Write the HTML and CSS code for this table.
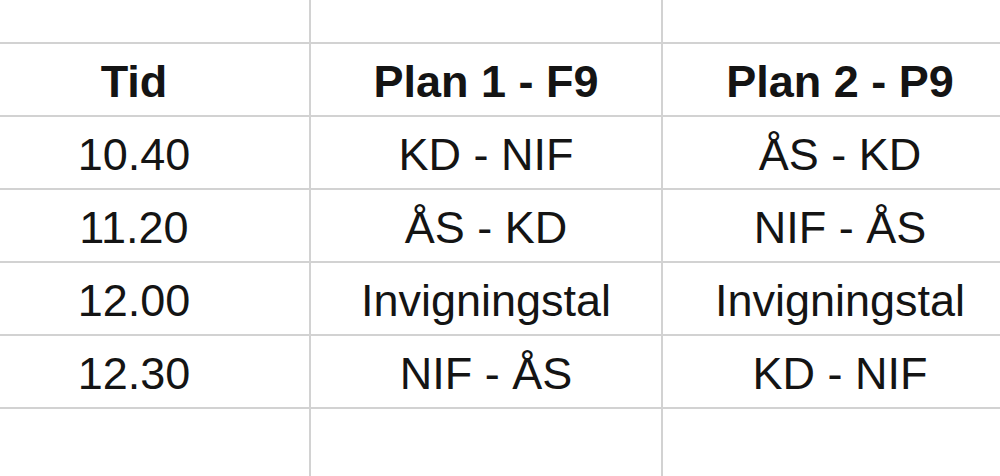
FILE: index.html
```html
<!DOCTYPE html>
<html lang="sv">
<head>
<meta charset="utf-8">
<title>Schema</title>
<link rel="stylesheet" href="styles.css">
</head>
<body>
<div class="sheet">
  <div class="cell"></div><div class="cell"></div><div class="cell"></div>
  <div class="cell head">Tid</div><div class="cell head">Plan 1 - F9</div><div class="cell head">Plan 2 - P9</div>
  <div class="cell">10.40</div><div class="cell">KD - NIF</div><div class="cell">ÅS - KD</div>
  <div class="cell">11.20</div><div class="cell">ÅS - KD</div><div class="cell">NIF - ÅS</div>
  <div class="cell">12.00</div><div class="cell">Invigningstal</div><div class="cell">Invigningstal</div>
  <div class="cell">12.30</div><div class="cell">NIF - ÅS</div><div class="cell">KD - NIF</div>
  <div class="cell"></div><div class="cell"></div><div class="cell"></div>
</div>
</body>
</html>
```

FILE: styles.css
```css
html, body {
  margin: 0;
  padding: 0;
  background: #ffffff;
  overflow: hidden;
}

body {
  width: 1000px;
  height: 476px;
}

.sheet {
  display: grid;
  grid-template-columns: 352px 352px 356px;
  grid-auto-rows: 73px;
  margin-left: -41px;
  margin-top: -29px;
  font-family: "Liberation Sans", Arial, sans-serif;
  font-size: 45px;
  color: #141414;
}

.cell {
  box-sizing: border-box;
  border-right: 2px solid #d2d2d2;
  border-bottom: 2px solid #d2d2d2;
  display: flex;
  align-items: center;
  justify-content: center;
  white-space: nowrap;
  padding-top: 4px;
}

.head {
  font-weight: bold;
}
```
